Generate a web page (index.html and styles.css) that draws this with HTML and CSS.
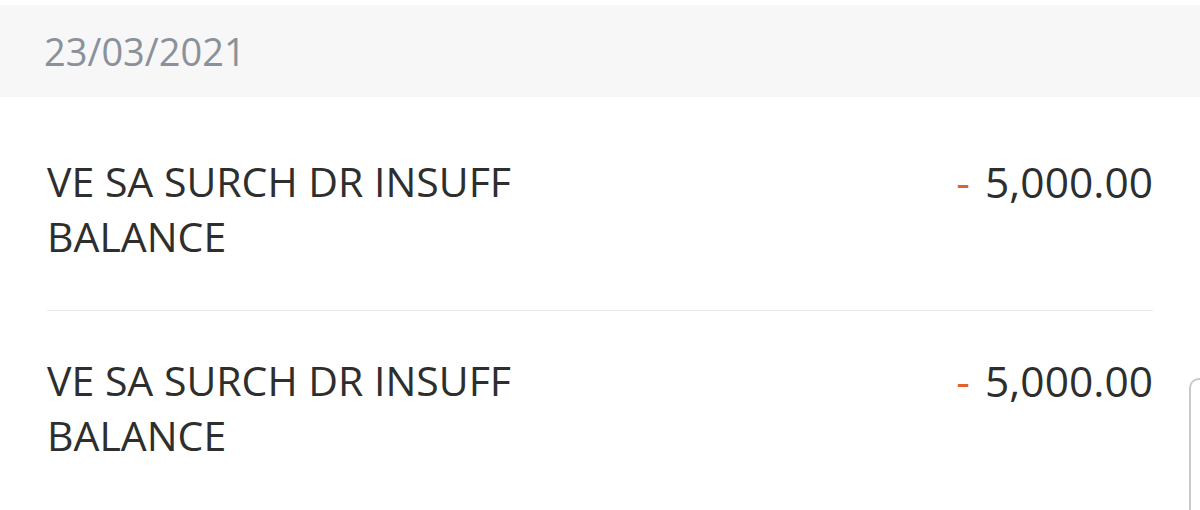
FILE: index.html
```html
<!DOCTYPE html>
<html>
<head>
<meta charset="utf-8">
<link rel="stylesheet" href="styles.css">
</head>
<body>
<div class="page">
  <div class="date-header">23/03/2021</div>
  <ul class="tx-list">
    <li class="tx">
      <div class="tx-desc">VE SA SURCH DR INSUFF<br>BALANCE</div>
      <div class="tx-amount"><span class="sign">-</span>5,000.00</div>
    </li>
    <li class="tx">
      <div class="tx-desc">VE SA SURCH DR INSUFF<br>BALANCE</div>
      <div class="tx-amount"><span class="sign">-</span>5,000.00</div>
    </li>
  </ul>
  <div class="edge-card"></div>
</div>
</body>
</html>
```
FILE: styles.css
```css
html, body {
  margin: 0;
  padding: 0;
  background: #ffffff;
}
body {
  font-family: "Open Sans", "Noto Sans", sans-serif;
  width: 1200px;
  height: 510px;
  overflow: hidden;
}
.page {
  position: relative;
  padding-top: 5px;
  height: 510px;
  box-sizing: border-box;
  overflow: hidden;
}
.date-header {
  height: 92px;
  background: #f7f7f7;
  display: flex;
  align-items: center;
  padding-left: 44px;
  font-size: 38px;
  color: #8b919b;
  line-height: 1;
}
.tx-list {
  list-style: none;
  margin: 0;
  padding: 15px 47px 0 47px;
}
.tx {
  display: flex;
  justify-content: space-between;
  align-items: flex-start;
  padding: 42px 0 46px 0;
  border-bottom: 1px solid #e8e8e8;
}
.tx:last-child {
  border-bottom: none;
  padding-bottom: 0;
}
.tx-desc {
  font-size: 41px;
  line-height: 55px;
  color: #2e2e2e;
}
.tx-amount {
  font-size: 42.5px;
  line-height: 55px;
  color: #2e2e2e;
  white-space: nowrap;
}
.sign {
  color: #e0622c;
  margin-right: 15px;
}
.edge-card {
  position: absolute;
  left: 1189px;
  top: 378px;
  width: 40px;
  height: 132px;
  border: 2px solid #c9c9c9;
  border-bottom: none;
  border-radius: 10px 10px 0 0;
  box-sizing: border-box;
}
```
